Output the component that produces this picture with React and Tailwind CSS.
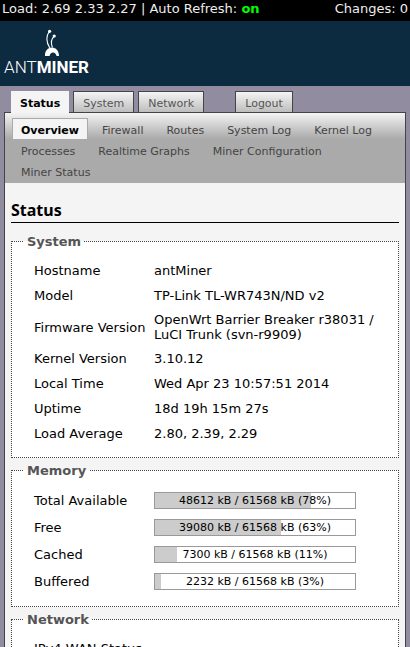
const tabs = [
  { label: 'Status', active: true },
  { label: 'System' },
  { label: 'Network' },
  { label: 'Logout', apart: true },
]

const subTabs = [
  'Overview',
  'Firewall',
  'Routes',
  'System Log',
  'Kernel Log',
  'Processes',
  'Realtime Graphs',
  'Miner Configuration',
  'Miner Status',
]

const systemRows = [
  ['Hostname', 'antMiner'],
  ['Model', 'TP-Link TL-WR743N/ND v2'],
  ['Firmware Version', 'OpenWrt Barrier Breaker r38031 / LuCI Trunk (svn-r9909)'],
  ['Kernel Version', '3.10.12'],
  ['Local Time', 'Wed Apr 23 10:57:51 2014'],
  ['Uptime', '18d 19h 15m 27s'],
  ['Load Average', '2.80, 2.39, 2.29'],
]

const TOTAL_KB = 61568

const memoryRows = [
  ['Total Available', 48612],
  ['Free', 39080],
  ['Cached', 7300],
  ['Buffered', 2232],
]

const Logo = () => (
  <a href="#" aria-label="AntMiner" className="block w-max">
    <svg width="100" height="56" viewBox="0 0 100 56" className="block">
      <g fill="none" stroke="#fff" strokeLinecap="round">
        <path d="M49.3 6.5 C46 11 46.2 17 49.8 23" strokeWidth="1.1" />
        <path d="M54 11.5 C51.3 14 50.8 18 52.3 22" strokeWidth="1.1" />
      </g>
      <circle cx="49.6" cy="6.3" r="1.6" fill="#fff" />
      <circle cx="54.2" cy="11" r="1.6" fill="#fff" />
      <path
        d="M45 31 C44.8 26 47.8 22.5 52 22.5 C56 22.5 59 26 59 31 L56.6 31 C56 28.8 54.8 27.4 53 27.4 C51.2 27.4 50 28.8 49.6 31 Z"
        fill="#fff"
      />
      <text x="4" y="48" fill="#fff" fontSize="17" className="font-[Roboto,sans-serif]">
        <tspan fontWeight="300">ANT</tspan>
        <tspan fontWeight="700">MINER</tspan>
      </text>
    </svg>
  </a>
)

const Section = ({ title, children }) => (
  <fieldset className="mb-[3px] border border-dotted border-[#444] bg-white px-[22px] pt-2 pb-[11px]">
    <legend className="-ml-2.5 px-[3px] pt-0.5 text-[13px] leading-4 font-bold text-[#555]">
      {title}
    </legend>
    <table className="w-full border-collapse text-left text-[13px] leading-[15px]">
      <tbody>{children}</tbody>
    </table>
  </fieldset>
)

const Row = ({ label, children }) => (
  <tr>
    <th scope="row" className="w-[120px] py-[5px] font-normal whitespace-nowrap">
      {label}
    </th>
    <td className="py-1">{children}</td>
  </tr>
)

const MemoryBar = ({ label, value }) => {
  const percent = Math.floor((value / TOTAL_KB) * 100)

  return (
    <div
      role="progressbar"
      aria-label={label}
      aria-valuenow={percent}
      className="relative my-px h-[17px] w-[202px] border border-[#999] text-center text-[11px] leading-[16px]"
    >
      <div className="absolute inset-y-0 left-0 bg-[#ccc]" style={{ width: `${percent}%` }} />
      <span className="relative">
        {value} kB / {TOTAL_KB} kB ({percent}%)
      </span>
    </div>
  )
}

export default function App() {
  return (
    <div className="flex h-screen flex-col overflow-hidden bg-[#918ca0] font-['DejaVu_Sans',Verdana,sans-serif] text-black">
      <div className="flex h-[21px] shrink-0 justify-between bg-black px-0.5 text-[13px] leading-[17px] text-[#eee]">
        <span>
          Load: 2.69 2.33 2.27 | Auto Refresh:{' '}
          <button type="button" className="font-bold text-[#0f0]">
            on
          </button>
        </span>
        <span>Changes: 0</span>
      </div>

      <header className="h-[65px] shrink-0 bg-[#0c2b40] pt-1">
        <Logo />
      </header>

      <nav className="-mb-px flex shrink-0 gap-1 px-[11px] pt-[5px] text-[11px]">
        {tabs.map(({ label, active, apart }) => (
          <a
            key={label}
            href="#"
            className={`h-[22px] border border-b-0 leading-[23px] ${
              active
                ? 'z-10 border-[#f4f4f4] bg-[#f4f4f4] px-2 font-bold text-black'
                : 'border-[#444] bg-linear-to-b from-[#f4f4f4] to-[#bbb] px-[9px] text-[#555]'
            } ${apart ? 'ml-[27px]' : ''}`}
          >
            {label}
          </a>
        ))}
      </nav>

      <div className="mx-1 grow border border-b-0 border-[#444] bg-[#f4f4f4]">
        <nav className="flex flex-wrap gap-x-[5px] bg-[#aaa] bg-linear-to-b from-[#f4f4f4] to-[#aaa] to-[26px] px-[7px] pt-[5px] pb-0.5 text-[11px]">
          {subTabs.map((label, i) => (
            <a
              key={label}
              href="#"
              className={`h-[21px] border border-b-0 px-2 leading-[23px] ${
                i === 0
                  ? 'border-[#aaa] bg-[#f4f4f4] font-bold text-black'
                  : 'border-transparent text-[#444]'
              }`}
            >
              {label}
            </a>
          ))}
        </nav>

        <main className="px-1.5 pt-[15px]">
          <h2 className="mb-[9px] border-b border-black font-['Noto_Sans','Open_Sans',sans-serif] text-base font-bold">
            Status
          </h2>

          <Section title="System">
            {systemRows.map(([label, value]) => (
              <Row key={label} label={label}>
                {value}
              </Row>
            ))}
          </Section>

          <Section title="Memory">
            {memoryRows.map(([label, value]) => (
              <Row key={label} label={label}>
                <MemoryBar label={label} value={value} />
              </Row>
            ))}
          </Section>

          <Section title="Network">
            <Row label="IPv4 WAN Status" />
          </Section>
        </main>
      </div>
    </div>
  )
}
